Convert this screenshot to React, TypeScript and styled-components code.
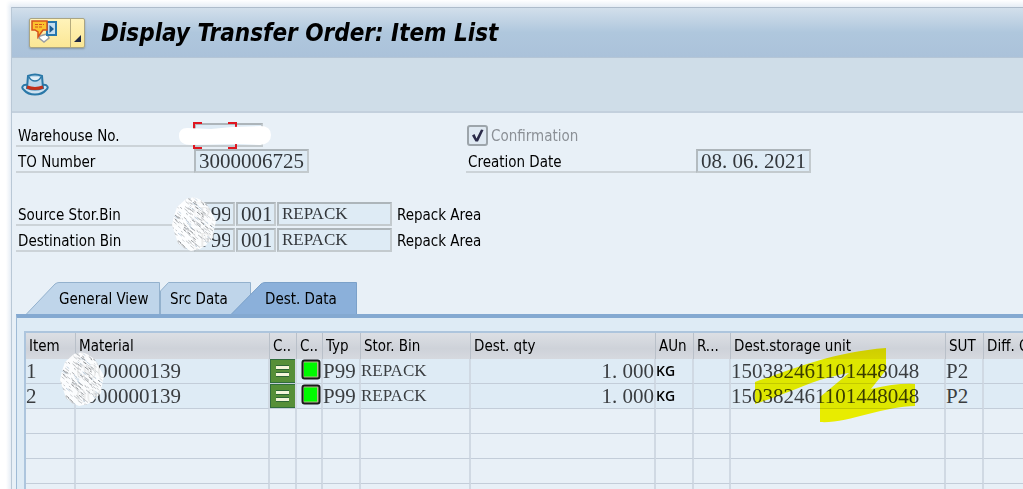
import React from 'react';
import styled, { createGlobalStyle } from 'styled-components';

const ui = '"DejaVu Sans Condensed", "Noto Sans", sans-serif';
const data = '"Liberation Serif", "Noto Sans CJK SC", serif';

const Global = createGlobalStyle`
  * { box-sizing: border-box; }
  body { margin: 0; background: #fff; color: #000; font-family: ${ui}; font-size: 15px; }
  button, input { font: inherit; color: inherit; }
`;

const Page = styled.div`
  height: 100vh;
  overflow: hidden;
  padding: 7px 0 0 11px;
  background: linear-gradient(#fff, rgba(255, 255, 255, 0) 7px), linear-gradient(90deg, #fff 0, #fff 6px, #e6edf5 11px);
`;

const Window = styled.main`
  min-height: 100%;
  background: #e8f0f7;
  border-left: 1px solid #b9c8d6;
  border-top: 1px solid #aebccb;
`;

const TitleBar = styled.header`
  display: flex;
  align-items: center;
  gap: 16px;
  height: 50px;
  padding: 0 17px;
  background: linear-gradient(#d2dfeb, #afc7dd 50%, #abc2da);
  border-bottom: 1px solid #b4c5d6;
`;

const Title = styled.h1`
  margin: 0;
  font-size: 24px;
  line-height: 28px;
  font-style: italic;
  font-weight: 700;
  color: #000;
  white-space: nowrap;
`;

const MenuButton = styled.button`
  display: flex;
  width: 56px;
  height: 30px;
  padding: 0;
  border: 1px solid #aaa583;
  border-radius: 2px;
  background: linear-gradient(#fff3ba, #fbe795);
  box-shadow: 0 1px 2px #8495a6;
`;

const Toolbar = styled.div`
  display: flex;
  align-items: center;
  height: 55px;
  padding: 0 9px;
  background: #cfdde8;
  border-bottom: 2px solid #c3d0dd;
`;

const IconButton = styled.button`
  display: flex;
  padding: 0;
  border: 0;
  background: none;
`;

const Form = styled.form`
  display: grid;
  grid-template-columns: 450px 1fr;
  padding: 10px 0 0 4px;
`;

const FormRow = styled.div<{ $wide?: boolean }>`
  position: relative;
  display: flex;
  height: 26px;
  align-items: flex-start;
  grid-column: ${p => (p.$wide ? '1 / -1' : 'auto')};
`;

const Spacer = styled.div`
  grid-column: 1 / -1;
  height: 27px;
`;

const Label = styled.label<{ $w: number }>`
  flex: none;
  width: ${p => p.$w}px;
  height: 24px;
  padding-left: 2px;
  line-height: 26px;
  border-bottom: 2px solid #ccd3d8;
  white-space: nowrap;
`;

const Field = styled.input<{ $w: number; $small?: boolean }>`
  flex: none;
  width: ${p => p.$w}px;
  height: 24px;
  margin-right: 1px;
  padding: 0 3px;
  border: 2px solid #c3cace;
  border-top-color: #adb5ba;
  border-left-color: #b3bbc0;
  border-radius: 0;
  background: #deebf5;
  color: #33373b;
  font-family: ${data};
  font-size: ${p => (p.$small ? 17 : 21)}px;
  outline: 0;
`;

const Note = styled.span`
  padding-left: 4px;
  line-height: 26px;
  white-space: nowrap;
`;

const CheckLabel = styled.label`
  display: flex;
  align-items: center;
  gap: 3px;
  height: 25px;
  padding-left: 1px;
  color: #8b9096;
`;

const CheckBox = styled.span`
  position: relative;
  display: flex;
`;

const Check = styled.input`
  appearance: none;
  width: 21px;
  height: 21px;
  margin: 0;
  border: 2px solid #9da5ab;
  border-radius: 3px;
  background: #dfe9f2;
`;

const Overlay = styled.svg`
  position: absolute;
  overflow: visible;
  pointer-events: none;
`;

const CheckMark = styled(Overlay)`
  left: 0;
  top: 0;
`;

const FocusMarks = styled(Overlay)`
  left: 176px;
  top: -2px;
`;

const FormScribble = styled(Overlay)`
  left: 156px;
  top: -31px;
`;

const CellScribble = styled(Overlay)`
  left: -16px;
  top: -32px;
`;

const Marker = styled(Overlay)`
  left: 22px;
  top: -37px;
  mix-blend-mode: multiply;
`;

const Tabs = styled.div`
  display: flex;
  height: 32px;
  margin-top: 28px;
  padding-left: 14px;
`;

const Tab = styled.button<{ $w: number; $pad: number; $overlap?: number }>`
  position: relative;
  width: ${p => p.$w}px;
  height: 32px;
  margin: 0 0 0 ${p => -(p.$overlap || 0)}px;
  padding: 2px 0 0 ${p => p.$pad}px;
  border: 0;
  background: none;
  text-align: left;
  white-space: nowrap;
`;

const TabShape = styled.svg`
  position: absolute;
  inset: 0;
`;

const TabText = styled.span`
  position: relative;
`;

const Panel = styled.section`
  margin-left: 4px;
  padding: 13px 0 0 7px;
  border-top: 4px solid #84a9d1;
  border-left: 1px solid #9fbbd6;
  background: #deebf5;
`;

const Grid = styled.table`
  width: 100%;
  table-layout: fixed;
  border-collapse: separate;
  border-spacing: 0;
  border: 2px solid #adc5dd;
  border-right: 0;
  border-bottom: 0;
  background: #e8f0f7;
  th:last-child, td:last-child { border-right: 0; }
`;

const Head = styled.th`
  height: 26px;
  padding: 0 0 0 3px;
  border-right: 1px solid #b9c0c9;
  background: linear-gradient(#dcdfe4, #ced2d9 60%, #d6d9df);
  text-align: left;
  font-weight: 400;
  white-space: nowrap;
`;

const Cell = styled.td<{ $filled?: boolean; $right?: boolean; $font?: 'small' | 'unit' }>`
  position: ${p => (p.$filled ? 'relative' : 'static')};
  height: 25px;
  padding: 0;
  border-right: 2px solid #d0d9e3;
  border-bottom: 1px solid #c3cdd9;
  background: ${p => (p.$filled ? '#deebf5' : '#e8f0f7')};
  color: ${p => (p.$font === 'unit' ? '#000' : '#3a3d40')};
  font-family: ${p => (p.$font === 'unit' ? '"Open Sans", "Noto Sans", sans-serif' : data)};
  font-weight: ${p => (p.$font === 'unit' ? 600 : 400)};
  font-size: ${p => (p.$font === 'unit' ? 14 : p.$font === 'small' ? 17 : 21)}px;
  line-height: 24px;
  text-align: ${p => (p.$right ? 'right' : 'left')};
  white-space: nowrap;
`;

const CellIcon = styled.svg`
  display: block;
`;

const Equal = () => (
  <CellIcon width="25" height="24" viewBox="0 0 25 24">
    <rect width="25" height="24" fill="#568f38" />
    <path d="M0 .5h25M.5 0v24M0 23.5h25" stroke="#2f6c3c" fill="none" />
    <path d="M6 8.5h13M6 15.5h13" stroke="#2d6636" strokeWidth="5" />
    <path d="M6 8.5h13M6 15.5h13" stroke="#f4f5da" strokeWidth="3" />
  </CellIcon>
);

const Light = () => (
  <CellIcon width="25" height="24" viewBox="0 0 25 24">
    <rect x="5.5" y="1.5" width="17" height="18" rx="2" fill="#b5b98d" stroke="#191919" strokeWidth="2" />
    <rect x="7" y="3.5" width="13" height="14" fill="#00fa00" />
  </CellIcon>
);

const noise = (n: number) => {
  const v = Math.sin(n * 127.1) * 43758.5453;
  return v - Math.floor(v);
};

const marks = Array.from({ length: 230 }, (_, i) => ({
  x: noise(i + 1) * 42,
  y: noise(i + 501) * 54,
  l: 1 + noise(i + 901) * 3,
  ink: Math.floor(noise(i + 1301) * 6),
}));

const inks = ['#c6c9cc', '#b2b5b8', '#d4d7da', '#8d9094', '#c6c9cc', '#c4d3e0'];

const Scribble = ({ id }: { id: string }) => (
  <>
    <clipPath id={id}>
      <path d="M14 2q9-4 16 2l6 4 3 7 5 9-2 9-1 8-7 7-6 4-9 2-7-3-6-5-3-9-3-9 2-9 3-9z" />
    </clipPath>
    <g clipPath={`url(#${id})`}>
      <rect width="44" height="54" fill="#fff" fillOpacity="0.9" />
      {marks.map((m, i) => (
        <path key={i} d={`M${m.x} ${m.y}l${m.l} ${m.l * 0.8}`} stroke={inks[m.ink]} />
      ))}
    </g>
  </>
);

const columns: [string, number | undefined][] = [
  ['Item', 50], ['Material', 194], ['C..', 27], ['C..', 26], ['Typ', 38], ['Stor. Bin', 110],
  ['Dest. qty', 185], ['AUn', 38], ['R...', 37], ['Dest.storage unit', 215], ['SUT', 38], ['Diff. Q', undefined],
];

const bins = ['Source Stor.Bin', 'Destination Bin'];

export default function App() {
  return (
    <Page>
      <Global />
      <Window>
        <TitleBar>
          <MenuButton type="button" aria-label="Menu">
            <svg width="54" height="28" viewBox="0 0 54 28">
              <path d="M40.5 0v28" stroke="#b5ab7c" />
              <path d="M51 16v7h-7z" fill="#1e2743" />
              <path d="M10 17l-1 2 5 4 5-4-2-4z" fill="#fff" stroke="#9a9fa5" strokeWidth="1.5" />
              <rect x="17" y="3" width="9" height="13" fill="#c3ddf0" stroke="#2677ad" strokeWidth="2" />
              <path d="M19.5 6l4.5 4-4.500 4z" fill="#1c5f94" />
              <path d="M2 2h15v9h-4l-5 7v-5l-3-2H2z" fill="#fbc22d" stroke="#d5521d" strokeWidth="1.5" />
              <path d="M5 5.5h9M5 8h8" stroke="#d5521d" strokeDasharray="3 1" />
            </svg>
          </MenuButton>
          <Title>Display Transfer Order: Item List</Title>
        </TitleBar>
        <Toolbar>
          <IconButton type="button" aria-label="Header">
            <svg width="28" height="24" viewBox="0 0 28 24">
              <path d="M7 12c-6-1-7 3-4 5 5 6 17 6 22 0 3-2 2-6-4-5" fill="#cfe2f0" stroke="#2a78a8" strokeWidth="2" />
              <path d="M6 15L7 3q7-3 14 0l1 12q-8 3-16 0z" fill="#b9d7ec" stroke="#2a78a8" strokeWidth="2" />
              <path d="M8 4q2 4 6 4t6-4" fill="#e2eff8" stroke="#2a78a8" strokeWidth="1.5" />
              <path d="M6 14q8 3 16 0" fill="none" stroke="#c3301a" strokeWidth="3" />
            </svg>
          </IconButton>
        </Toolbar>

        <Form>
          <FormRow>
            <Label htmlFor="wh" $w={178}>Warehouse No.</Label>
            <Field id="wh" readOnly $w={69} />
            <FocusMarks width="46" height="28" viewBox="0 0 46 28">
              <path d="M2 8V2h8M36 2h8v6M2 20v7h8M36 27h8v-7" fill="none" stroke="#df1620" strokeWidth="2" />
              <path d="M-13 15q0-8 8-8l24 1 21-2 28-1q11 0 11 9t-11 10l-22-1-46 1q-13 0-13-9z" fill="#fff" />
            </FocusMarks>
          </FormRow>
          <FormRow>
            <CheckLabel>
              <CheckBox>
                <Check type="checkbox" checked readOnly />
                <CheckMark width="21" height="21" viewBox="0 0 21 21">
                  <path d="M5 10.5L7.5 9l2 4.500L14 4.500l2.500.5L11 16.500H8.500z" fill="#2a2a48" />
                </CheckMark>
              </CheckBox>
              Confirmation
            </CheckLabel>
          </FormRow>
          <FormRow>
            <Label htmlFor="to" $w={178}>TO Number</Label>
            <Field id="to" readOnly value="3000006725" $w={115} />
          </FormRow>
          <FormRow>
            <Label htmlFor="date" $w={230}>Creation Date</Label>
            <Field id="date" readOnly value="08. 06. 2021" $w={115} />
          </FormRow>
          <Spacer />
          {bins.map((name, i) => (
            <FormRow key={name} $wide>
              <Label htmlFor={`bin${i}`} $w={178}>{name}</Label>
              <Field id={`bin${i}`} readOnly value="P99" $w={41} />
              <Field aria-label={`${name} section`} readOnly value="001" $w={40} />
              <Field aria-label={`${name} code`} readOnly value="REPACK" $w={115} $small />
              <Note>Repack Area</Note>
              {i === 1 && (
                <FormScribble width="44" height="54">
                  <Scribble id="form-scribble" />
                </FormScribble>
              )}
            </FormRow>
          ))}
        </Form>

        <Tabs role="tablist">
          <Tab type="button" role="tab" $w={134} $pad={33}>
            <TabShape width="134" height="32">
              <path d="M.5 32L29 2q2-1.500 4-1.500h100.500V32" fill="#bfd5ea" stroke="#93b1cd" />
            </TabShape>
            <TabText>General View</TabText>
          </Tab>
          <Tab type="button" role="tab" $w={91} $pad={10}>
            <TabShape width="91" height="32">
              <path d="M.5 32V9l8-8.500h82V32" fill="#bfd5ea" stroke="#93b1cd" />
            </TabShape>
            <TabText>Src Data</TabText>
          </Tab>
          <Tab type="button" role="tab" aria-selected $w={126} $pad={34} $overlap={20}>
            <TabShape width="126" height="32">
              <path d="M.5 32L30 2q2-1.500 4-1.500h91.500V32" fill="#8bb0da" stroke="#7ba1c9" />
            </TabShape>
            <TabText>Dest. Data</TabText>
          </Tab>
        </Tabs>

        <Panel>
          <Grid>
            <colgroup>
              {columns.map(([, w], i) => <col key={i} width={w} />)}
            </colgroup>
            <thead>
              <tr>{columns.map(([name], i) => <Head key={i}>{name}</Head>)}</tr>
            </thead>
            <tbody>
              {[1, 2].map(n => (
                <tr key={n}>
                  <Cell $filled>{n}</Cell>
                  <Cell $filled>
                    0000000139
                    {n === 2 && (
                      <CellScribble width="44" height="54">
                        <Scribble id="cell-scribble" />
                      </CellScribble>
                    )}
                  </Cell>
                  <Cell $filled><Equal /></Cell>
                  <Cell $filled><Light /></Cell>
                  <Cell $filled>P99</Cell>
                  <Cell $filled $font="small">REPACK</Cell>
                  <Cell $filled $right>1. 000</Cell>
                  <Cell $filled $font="unit">KG</Cell>
                  <Cell $filled />
                  <Cell $filled>
                    150382461101448048
                    {n === 2 && (
                      <Marker width="162" height="76">
                        <path d="M2 35C40 22 80 5 133 1v22L118 42q25-6 44-5v22c-30 0-70 18-95 16V50l29-24C60 32 40 45 2 57z" fill="#fffb00" />
                      </Marker>
                    )}
                  </Cell>
                  <Cell $filled>P2</Cell>
                  <Cell $filled />
                </tr>
              ))}
              {[3, 4, 5, 6].map(n => (
                <tr key={n}>{columns.map((_, i) => <Cell key={i} />)}</tr>
              ))}
            </tbody>
          </Grid>
        </Panel>
      </Window>
    </Page>
  );
}
